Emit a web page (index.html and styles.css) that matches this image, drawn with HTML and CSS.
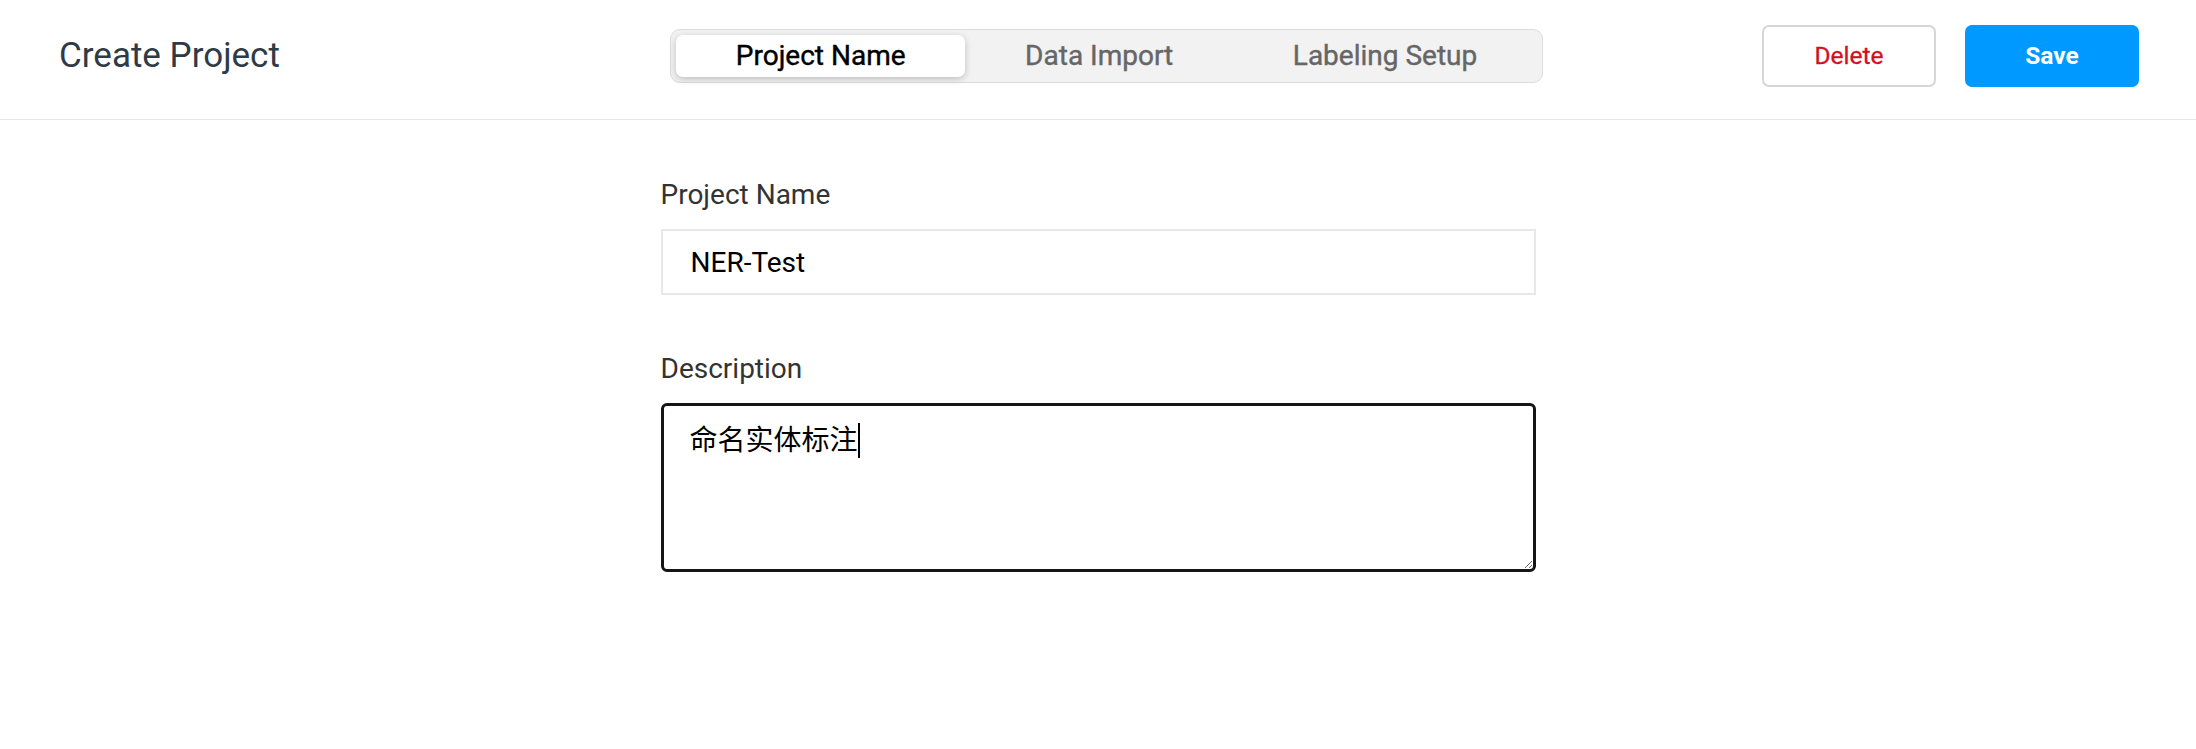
FILE: index.html
```html
<!DOCTYPE html>
<html lang="en">
<head>
<meta charset="utf-8">
<title>Create Project</title>
<link rel="stylesheet" href="styles.css">
</head>
<body>
<header class="header">
  <div class="header-title">Create Project</div>
  <nav class="tabs">
    <div class="tab tab-active">Project Name</div>
    <div class="tab">Data Import</div>
    <div class="tab">Labeling Setup</div>
  </nav>
  <div class="header-actions">
    <button class="btn btn-delete">Delete</button>
    <button class="btn btn-save">Save</button>
  </div>
</header>
<main class="form">
  <div class="field">
    <label class="field-label">Project Name</label>
    <input class="input" type="text" value="NER-Test">
  </div>
  <div class="field">
    <label class="field-label">Description</label>
    <div class="textarea-wrap">
      <textarea class="textarea">命名实体标注</textarea>
      <span class="caret"></span>
    </div>
  </div>
</main>
</body>
</html>
```
FILE: styles.css
```css
* { box-sizing: border-box; }
html, body { margin: 0; padding: 0; background: #fff; }
body {
  font-family: Roboto, "Noto Sans CJK SC", sans-serif;
  color: #000;
}
.header {
  height: 120px;
  padding: 0 57px 8px 59px;
  border-bottom: 1px solid #e6e6e6;
  display: flex;
  align-items: center;
}
.header-title {
  flex: 1 1 0;
  font-size: 35px;
  font-weight: 400;
  color: #2e3b47;
}
.tabs {
  width: 873px;
  margin-left: 15px;
  height: 54px;
  padding: 5px;
  display: flex;
  background: #f2f2f2;
  border: 1px solid #dcdcdc;
  border-radius: 10px;
}
.tab {
  flex: 1 1 auto;
  display: flex;
  align-items: center;
  justify-content: center;
  font-size: 28px;
  font-weight: 400;
  color: #666;
  -webkit-text-stroke: 0.4px currentColor;
  border-radius: 7px;
}
.tab-active {
  background: #fff;
  color: #000;
  box-shadow: 0 2px 7px rgba(0,0,0,0.22);
}
.header-actions {
  flex: 1 1 0;
  display: flex;
  justify-content: flex-end;
  gap: 29px;
}
.btn {
  width: 174px;
  height: 62px;
  border-radius: 7px;
  font-family: Roboto, sans-serif;
  font-size: 24.5px;
  font-weight: 400;
  cursor: pointer;
}
.btn-delete {
  background: #fff;
  color: #d1101f;
  -webkit-text-stroke: 0.3px currentColor;
  border: 2px solid #d6d6d6;
}
.btn-save {
  background: #0099ff;
  color: #fff;
  font-weight: 700;
  border: none;
}
.form {
  width: 875px;
  margin: 0 auto;
  padding-top: 54px;
  display: flex;
  flex-direction: column;
  gap: 53px;
}
.field {
  display: flex;
  flex-direction: column;
  gap: 13px;
}
.field-label {
  font-size: 28px;
  line-height: 42px;
  color: #333;
}
.input {
  height: 66px;
  padding: 0 28px;
  border: 2px solid #e8e8e8;
  font-family: Roboto, sans-serif;
  font-size: 28px;
  color: #000;
  outline: none;
}
.textarea-wrap {
  position: relative;
}
.textarea {
  display: block;
  width: 100%;
  height: 169px;
  padding: 14px 26px;
  border: 3px solid #151515;
  border-radius: 6px;
  font-family: Roboto, "Noto Sans CJK SC", sans-serif;
  font-size: 28px;
  line-height: 42px;
  color: #000;
  outline: none;
}
.caret {
  position: absolute;
  left: 197px;
  top: 20px;
  width: 2px;
  height: 35px;
  background: #000;
}
```
